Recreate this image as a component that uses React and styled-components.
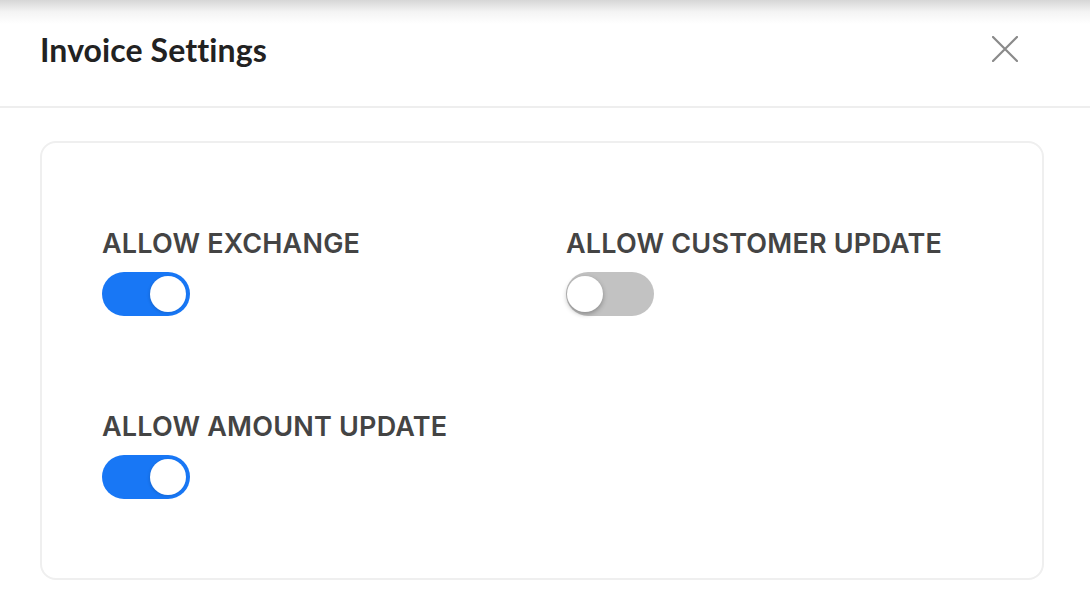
import React, { useState } from "react";
import styled, { createGlobalStyle } from "styled-components";

const GlobalStyle = createGlobalStyle`
  html, body {
    margin: 0;
    padding: 0;
    background: #ffffff;
  }
  body {
    font-family: Lato, "Liberation Sans", sans-serif;
  }
`;

const Modal = styled.div`
  width: 1090px;
  height: 596px;
  background: #ffffff;
  display: flex;
  flex-direction: column;
`;

const Header = styled.div`
  height: 108px;
  box-sizing: border-box;
  display: flex;
  align-items: center;
  justify-content: space-between;
  padding: 0 72px 8px 40px;
  background: linear-gradient(#d6d6d6 0px, #f4f4f4 12px, #ffffff 24px);
  border-bottom: 2px solid #eeeeee;
`;

const Title = styled.h2`
  margin: 0;
  font-size: 32px;
  font-weight: 700;
  color: #222222;
  letter-spacing: 0.1px;
`;

const CloseButton = styled.button`
  width: 26px;
  height: 26px;
  padding: 0;
  border: none;
  background: none;
  display: flex;
  align-items: center;
  justify-content: center;
  cursor: pointer;
`;

const Body = styled.div`
  padding: 33px 46px 16px 40px;
`;

const Card = styled.div`
  border: 2px solid #efefef;
  border-radius: 16px;
  height: 439px;
  box-sizing: border-box;
  padding: 86px 60px 0;
  display: grid;
  grid-template-columns: 464px 1fr;
  row-gap: 96px;
  align-content: start;
`;

const Field = styled.div`
  display: flex;
  flex-direction: column;
  align-items: flex-start;
  gap: 13px;
`;

const Label = styled.span`
  font-family: Inter, "Liberation Sans", sans-serif;
  font-size: 27px;
  line-height: 30px;
  font-weight: 600;
  color: #444444;
  letter-spacing: 0.2px;
`;

const Track = styled.button`
  position: relative;
  width: 88px;
  height: 44px;
  border: none;
  padding: 0;
  border-radius: 22px;
  cursor: pointer;
  background: ${(p) => (p.$on ? "#1877f5" : "#c2c2c2")};
  transition: background 0.2s;
`;

const Knob = styled.span`
  position: absolute;
  top: 4px;
  left: ${(p) => (p.$on ? "48px" : "1px")};
  width: 36px;
  height: 36px;
  border-radius: 50%;
  background: #ffffff;
  box-shadow: ${(p) =>
    p.$on ? "-1px 1px 3px rgba(0,0,0,0.12)" : "0 2px 5px rgba(0,0,0,0.3)"};
  transition: left 0.2s;
`;

const Toggle = ({ on, onChange }) => (
  <Track $on={on} role="switch" aria-checked={on} onClick={onChange}>
    <Knob $on={on} />
  </Track>
);

const CloseIcon = () => (
  <svg width="26" height="26" viewBox="0 0 26 26">
    <path
      d="M1 1 L25 25 M25 1 L1 25"
      stroke="#8a8a8a"
      strokeWidth="2.2"
      strokeLinecap="round"
      fill="none"
    />
  </svg>
);

export default function App() {
  const [settings, setSettings] = useState({
    exchange: true,
    customer: false,
    amount: true,
  });

  const flip = (key) => () =>
    setSettings((s) => ({ ...s, [key]: !s[key] }));

  return (
    <>
      <GlobalStyle />
      <Modal>
        <Header>
          <Title>Invoice Settings</Title>
          <CloseButton aria-label="Close">
            <CloseIcon />
          </CloseButton>
        </Header>
        <Body>
          <Card>
            <Field>
              <Label>ALLOW EXCHANGE</Label>
              <Toggle on={settings.exchange} onChange={flip("exchange")} />
            </Field>
            <Field>
              <Label>ALLOW CUSTOMER UPDATE</Label>
              <Toggle on={settings.customer} onChange={flip("customer")} />
            </Field>
            <Field>
              <Label>ALLOW AMOUNT UPDATE</Label>
              <Toggle on={settings.amount} onChange={flip("amount")} />
            </Field>
          </Card>
        </Body>
      </Modal>
    </>
  );
}
